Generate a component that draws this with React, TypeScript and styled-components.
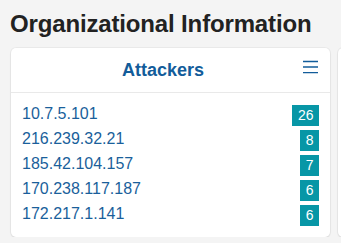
import styled, { createGlobalStyle } from 'styled-components';

// Global reset: page background and default font
const GlobalStyle = createGlobalStyle`
  html, body {
    margin: 0;
    padding: 0;
    background: #f4f4f4;
    font-family: "Liberation Sans", Arial, sans-serif;
    overflow: hidden;
  }
`;

const Page = styled.div`
  padding: 10px 0 0 11px;
`;

const Heading = styled.h1`
  margin: 0 0 10px -1px;
  font-size: 24px;
  line-height: 28px;
  font-weight: 700;
  letter-spacing: -0.15px;
  color: #222222;
  white-space: nowrap;
`;

// Row of cards, wider than the window
const CardRow = styled.div`
  display: flex;
  gap: 8px;
`;

const Card = styled.section<{ $empty?: boolean }>`
  flex: 0 0 319px;
  height: ${(p) => (p.$empty ? '189px' : 'auto')};
  background: #ffffff;
  border-radius: 5px;
  box-shadow: 0 0 0 1px rgba(0, 0, 0, 0.04), 0 1px 2px rgba(0, 0, 0, 0.08);
  overflow: hidden;
`;

const CardHeader = styled.header`
  display: flex;
  align-items: center;
  height: 44px;
  padding: 0 12px;
  border-bottom: 1px solid #e9e9e9;
`;

const CardTitle = styled.h2`
  flex: 1;
  margin: 0;
  text-align: center;
  font-size: 18px;
  font-weight: 700;
  color: #125c9a;
`;

const MenuButton = styled.button`
  display: flex;
  padding: 0;
  border: 0;
  background: none;
  color: #125c9a;
  cursor: pointer;
`;

const CardBody = styled.ul`
  list-style: none;
  margin: 0;
  padding: 10px 11px 9px;
`;

const Row = styled.li`
  display: flex;
  justify-content: space-between;
  align-items: flex-start;
  padding: 2px 0;
  height: 21px;
`;

const IpLink = styled.a`
  font-size: 16px;
  line-height: 17px;
  color: #1a5f9b;
  text-decoration: none;
`;

const Badge = styled.span`
  display: inline-block;
  height: 21px;
  line-height: 21px;
  padding: 0 5.5px;
  font-size: 14px;
  color: #ffffff;
  background: #0796a6;
`;

const MenuIcon = () => (
  <svg width="15" height="20" viewBox="0 0 15 20" aria-hidden="true">
    <g stroke="currentColor" strokeWidth="1.4">
      <line x1="0" y1="1.5" x2="15" y2="1.5" />
      <line x1="0" y1="7" x2="15" y2="7" />
      <line x1="0" y1="12.6" x2="15" y2="12.6" />
    </g>
  </svg>
);

const attackers = [
  { ip: '10.7.5.101', count: 26 },
  { ip: '216.239.32.21', count: 8 },
  { ip: '185.42.104.157', count: 7 },
  { ip: '170.238.117.187', count: 6 },
  { ip: '172.217.1.141', count: 6 },
];

const App = () => (
  <>
    <GlobalStyle />
    <Page>
      <Heading>Organizational Information</Heading>
      <CardRow>
        <Card>
          <CardHeader>
            <CardTitle>Attackers</CardTitle>
            <MenuButton aria-label="Menu">
              <MenuIcon />
            </MenuButton>
          </CardHeader>
          <CardBody>
            {attackers.map((a) => (
              <Row key={a.ip}>
                <IpLink href="#">{a.ip}</IpLink>
                <Badge>{a.count}</Badge>
              </Row>
            ))}
          </CardBody>
        </Card>
        {/* next card, only its edge shows */}
        <Card $empty />
      </CardRow>
    </Page>
  </>
);

export default App;
